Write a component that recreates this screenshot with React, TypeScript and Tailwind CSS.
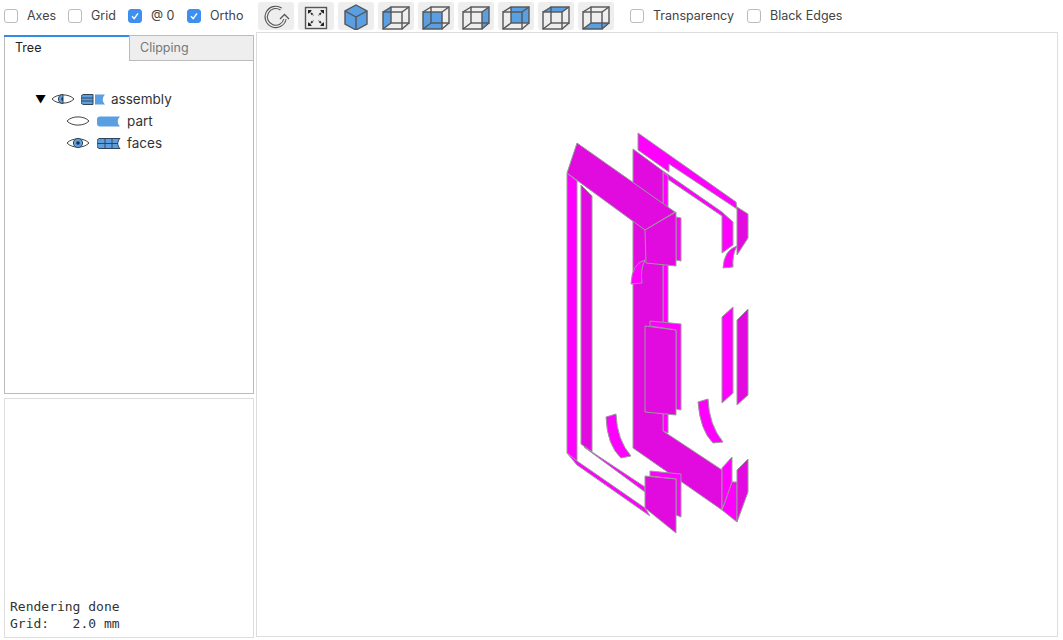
import React from 'react';

const BLUE = '#5a9fe2';
const LINE = '#555';
const UI_FONT = 'font-["Inter","Noto_Sans",sans-serif]';

const Check = ({ label, checked, className }: { label: string; checked?: boolean; className?: string }) => (
    <label className={`flex items-center gap-[9px] ${className ?? ''}`}>
        <span className={`flex h-[14px] w-[14px] items-center justify-center rounded-[3px] border ${checked ? 'border-[#3f8ff0] bg-[#3f8ff0]' : 'border-[#bbb] bg-white'}`}>
            {checked && (
                <svg width="10" height="10" viewBox="0 0 10 10">
                    <path d="M2 5.2 4.2 7.6 8 2.400" fill="none" stroke="#fff" strokeWidth="1.4" />
                </svg>
            )}
        </span>
        <span className="text-[12.5px] text-[#444]">{label}</span>
    </label>
);

const ToolButton = ({ children }: { children: React.ReactNode }) => (
    <button className="h-[28px] w-[36px] rounded-[3px] bg-[#eee]">
        <svg width="36" height="28" viewBox="0 0 36 28">{children}</svg>
    </button>
);

const Wire = ({ face }: { face: string }) => (
    <ToolButton>
        <polygon points={face} fill={BLUE} />
        <g fill="none" stroke={LINE} strokeWidth="1.4">
            <rect x="13" y="5" width="18" height="16" />
            <rect x="5" y="10" width="19" height="17" />
            <path d="M5 10 13 5M24 10 31 5M24 27 31 21M5 27 13 21" />
        </g>
    </ToolButton>
);

const Eye = ({ mode }: { mode: 'full' | 'half' | 'none' }) => (
    <svg width="24" height="14" viewBox="0 0 24 14" className="shrink-0">
        <path d="M1 7C6 1.500 18 1.500 23 7 18 12.500 6 12.500 1 7Z" fill="#fff" stroke="#444" strokeWidth="1" />
        {mode === 'full' && <circle cx="12" cy="7" r="4.6" fill={BLUE} stroke="#345" strokeWidth="1" />}
        {mode === 'full' && <circle cx="12" cy="7" r="1.8" fill="#234" />}
        {mode === 'half' && <path d="M12 2.400A4.600 4.600 0 0 0 12 11.600Z" fill={BLUE} stroke="#345" strokeWidth="1" />}
        {mode === 'half' && <path d="M12 5.200A1.800 1.800 0 0 0 12 8.800Z" fill="#234" />}
    </svg>
);

const SOLID = 'M3 1H23C20 4 20 8 23 11H3C1 11 0 10 0 8V4C0 2 1 1 3 1Z';

const FacesIcon = () => (
    <svg width="24" height="13" viewBox="0 0 24 12" className="shrink-0">
        <path d={SOLID} fill={BLUE} stroke="#345" strokeWidth="1" />
        <path d="M0 6H21M8 1V11M15 1V11" fill="none" stroke="#345" strokeWidth="1" />
    </svg>
);

const AssemblyIcon = () => (
    <svg width="24" height="13" viewBox="0 0 24 12" className="shrink-0">
        <path d="M3 1H12V11H3C1 11 0 10 0 8V4C0 2 1 1 3 1Z" fill={BLUE} stroke="#345" strokeWidth="1" />
        <path d="M0 4.500H12M0 7.500H12" stroke="#345" strokeWidth="1" />
        <path d="M14 1H24C21 4 21 8 24 11H14Z" fill={BLUE} />
    </svg>
);

const PartIcon = () => (
    <svg width="24" height="13" viewBox="0 0 24 12" className="shrink-0">
        <path d={SOLID} fill={BLUE} />
    </svg>
);

const BRIGHT = '#ff00ff';
const DARK = '#e20bdf';

// model faces, painted back to front
const faces: [string, string][] = [
    ['638,133 736,202 737,209 669,164 669,172 638,150', BRIGHT],
    ['737,207 748,214 748,238 737,255', DARK],
    ['663,171 722,212 733,222 733,245 722,253 722,216 663,176', BRIGHT],
    ['663,172 668,176 668,433 663,431', BRIGHT],
    ['633,149 663,171 663,431 722,470 722,510 633,448', DARK],
    ['737,320 748,309 748,395 737,405', DARK],
    ['722,317 733,307 733,393 722,403', BRIGHT],
    ['722,510 732,482 737,482 737,522', BRIGHT],
    ['722,468 732,457 732,482 722,510', BRIGHT],
    ['737,470 748,459 748,492 737,522', DARK],
    ['581,185 592,196 592,452 581,444', DARK],
    ['584,447 592,452 645,487 645,492', BRIGHT],
    ['567,173 577,181 577,461 567,453', BRIGHT],
    ['567,453 577,461 645,508 650,516 577,465', BRIGHT],
    ['577,143 567,173 645,230 675,212', DARK],
    ['676,217 681,218 681,261 676,260', BRIGHT],
    ['645,230 676,212 676,266 646,263', DARK],
    ['650,321 681,324 681,410 676,409 676,330 650,326', BRIGHT],
    ['645,326 676,330 676,415 645,412', DARK],
    ['650,471 681,474 681,517 676,515 676,479 650,476', BRIGHT],
    ['645,476 676,479 676,533 645,508', DARK],
];

const arcs = [
    'M698 402 708 399Q709 425 723 442L713 443Q700 430 698 402Z',
    'M606 417 616 414Q617 440 631 456L621 458Q607 445 606 417Z',
    'M631 284Q632 263 645 260Q640 270 642 283Z',
    'M723 268Q724 250 737 246Q732 255 733 267Z',
];

const App = () => {
    return (
        <div className={`flex h-[640px] w-[1063px] flex-col overflow-hidden bg-white ${UI_FONT}`}>
            <div className="flex h-[32px] items-center pl-[4px]">
                <Check label="Axes" className="w-[64px]" />
                <Check label="Grid" className="w-[60px]" />
                <Check label="@ 0" checked className="w-[59px]" />
                <Check label="Ortho" checked className="w-[71px]" />
                <div className="flex gap-[4px]">
                    <ToolButton>
                        <path d="M27 17A9.500 9.500 0 1 1 23 7" fill="none" stroke={LINE} strokeWidth="3.4" />
                        <path d="M27 17A9.500 9.500 0 1 1 23 7" fill="none" stroke="#eee" strokeWidth="1.2" />
                        <path d="M22 17 26.500 12.500 31 17" fill="#eee" stroke={LINE} strokeWidth="1.3" />
                    </ToolButton>
                    <ToolButton>
                        <rect x="7.500" y="5.500" width="21" height="21" fill="none" stroke={LINE} strokeWidth="1.4" />
                        <path d="M11 9 15.500 13.500M25 9 20.500 13.500M11 23 15.500 18.500M25 23 20.500 18.500" stroke="#222" strokeWidth="1.8" strokeDasharray="2 1" />
                        <path d="M10 8H14L10 12ZM26 8H22L26 12ZM10 24H14L10 20ZM26 24H22L26 20Z" fill="#222" />
                    </ToolButton>
                    <ToolButton>
                        <polygon points="18,3 29,9 29,22 18,28 7,22 7,9" fill={BLUE} stroke={LINE} strokeWidth="1.4" />
                        <path d="M7 9 18 15 29 9M18 15V28" fill="none" stroke={LINE} strokeWidth="1.4" />
                    </ToolButton>
                    <Wire face="5,10 13,5 13,21 5,27" />
                    <Wire face="5,10 24,10 24,27 5,27" />
                    <Wire face="24,10 31,5 31,21 24,27" />
                    <Wire face="13,5 31,5 31,21 13,21" />
                    <Wire face="5,10 13,5 31,5 24,10" />
                    <Wire face="5,27 13,21 31,21 24,27" />
                </div>
                <Check label="Transparency" className="ml-[16px] w-[117px]" />
                <Check label="Black Edges" />
            </div>

            <div className="flex">
                <div className="flex w-[256px] flex-col pl-[4px]">
                    <div className="mt-[3px] h-[359px] w-[250px] border border-t-0 border-[#bbb]">
                        <div className="flex h-[26px] text-[12.5px]">
                            <div className="-ml-px w-[125px] border-t-2 border-[#2f8de4] pl-[11px] pt-[2px] text-[#222]">Tree</div>
                            <div className="flex-1 border-t border-b border-l border-[#bbb] bg-[#eee] pl-[10px] pt-[3px] text-[#777]">Clipping</div>
                        </div>
                        <div className="flex flex-col pt-[27px] text-[13.5px] text-[#333]">
                            <div className="flex h-[22px] items-center pl-[30px]">
                                <span className="w-[16px] text-[11px] leading-none text-black">▼</span>
                                <Eye mode="half" />
                                <span className="ml-[6px]"><AssemblyIcon /></span>
                                <span className="ml-[6px]">assembly</span>
                            </div>
                            <div className="flex h-[22px] items-center pl-[61px]">
                                <Eye mode="none" />
                                <span className="ml-[7px]"><PartIcon /></span>
                                <span className="ml-[6px]">part</span>
                            </div>
                            <div className="flex h-[22px] items-center pl-[61px]">
                                <Eye mode="full" />
                                <span className="ml-[7px]"><FacesIcon /></span>
                                <span className="ml-[6px]">faces</span>
                            </div>
                        </div>
                    </div>
                    <div className='mt-[4px] flex h-[240px] w-[250px] flex-col justify-end whitespace-pre border border-[#ddd] px-[5px] pb-[5px] font-["DejaVu_Sans_Mono",monospace] text-[13px] leading-[17px] text-[#333]'>
                        <div>Rendering done</div>
                        <div>Grid:   2.0 mm</div>
                    </div>
                </div>
                <div className="h-[605px] w-[802px] border border-[#ddd]">
                    <svg width="800" height="603" viewBox="257 33 800 603">
                        {faces.map(([points, fill]) => (
                            <polygon key={points} points={points} fill={fill} stroke="#999" strokeWidth="1" />
                        ))}
                        {arcs.map(d => (
                            <path key={d} d={d} fill={BRIGHT} stroke="#999" strokeWidth="1" />
                        ))}
                    </svg>
                </div>
            </div>
        </div>
    );
};

export default App;
